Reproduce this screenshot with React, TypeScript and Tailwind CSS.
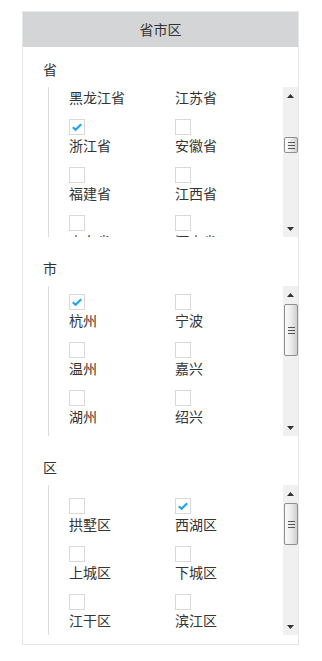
import { useLayoutEffect, useRef } from 'react'

type Item = { name: string; checked?: boolean }

const provinces: Item[] = [
  { name: '黑龙江省' },
  { name: '江苏省' },
  { name: '浙江省', checked: true },
  { name: '安徽省' },
  { name: '福建省' },
  { name: '江西省' },
  { name: '山东省' },
  { name: '河南省' },
  { name: '湖北省' },
  { name: '湖南省' },
]

const cities: Item[] = [
  { name: '杭州', checked: true },
  { name: '宁波' },
  { name: '温州' },
  { name: '嘉兴' },
  { name: '湖州' },
  { name: '绍兴' },
  { name: '金华' },
  { name: '衢州' },
]

const districts: Item[] = [
  { name: '拱墅区' },
  { name: '西湖区', checked: true },
  { name: '上城区' },
  { name: '下城区' },
  { name: '江干区' },
  { name: '滨江区' },
  { name: '萧山区' },
  { name: '余杭区' },
]

function Checkbox({ checked }: { checked?: boolean }) {
  return (
    <span className="flex h-4 w-4 items-center justify-center border border-[#d9d9d9] bg-white">
      {checked && (
        <svg width="12" height="12" viewBox="0 0 12 12">
          <path d="M1.8 6.2 L4.6 8.8 L10.2 3.2" fill="none" stroke="#1ea5ee" strokeWidth="2.2" />
        </svg>
      )}
    </span>
  )
}

// Classic-looking scrollbar drawn next to the list
function ScrollBar({ thumbTop, thumbHeight }: { thumbTop: number; thumbHeight: number }) {
  return (
    <div className="flex w-[15px] shrink-0 flex-col bg-[#f0f0f0]">
      <div className="flex h-[17px] items-center justify-center">
        <svg width="7" height="4" viewBox="0 0 7 4">
          <path d="M3.5 0 L7 4 L0 4 Z" fill="#333" />
        </svg>
      </div>
      <div className="relative flex-1">
        <div
          className="absolute left-[1px] flex w-[14px] flex-col items-center justify-center gap-[2px] rounded-[2px] border border-[#8e8e8e] bg-gradient-to-r from-[#fafafa] via-[#ececec] to-[#cfcfcf]"
          style={{ top: thumbTop, height: thumbHeight }}
        >
          <span className="h-px w-[7px] bg-[#555]" />
          <span className="h-px w-[7px] bg-[#555]" />
          <span className="h-px w-[7px] bg-[#555]" />
        </div>
      </div>
      <div className="flex h-[17px] items-center justify-center">
        <svg width="7" height="4" viewBox="0 0 7 4">
          <path d="M0 0 L7 0 L3.5 4 Z" fill="#333" />
        </svg>
      </div>
    </div>
  )
}

function Section({
  label,
  items,
  scrollTop = 0,
  padTop,
  thumbTop,
  thumbHeight,
  className = '',
}: {
  label: string
  items: Item[]
  scrollTop?: number
  padTop: string
  thumbTop: number
  thumbHeight: number
  className?: string
}) {
  const listRef = useRef<HTMLDivElement>(null)

  useLayoutEffect(() => {
    if (listRef.current) listRef.current.scrollTop = scrollTop
  }, [scrollTop])

  return (
    <div className={className}>
      <div className="pl-5 text-[14px] leading-5 text-[#333]">{label}</div>
      <div className="mt-2 ml-[25px] flex h-[150px] border-l border-[#dcdcdc]">
        <div ref={listRef} className="flex-1 overflow-hidden">
          <div className={`grid grid-cols-[106px_106px] pl-5 ${padTop}`}>
            {items.map((item) => (
              <label key={item.name} className="mb-3 flex flex-col items-start">
                <Checkbox checked={item.checked} />
                <span className="text-[14px] leading-5 text-[#333]">{item.name}</span>
              </label>
            ))}
          </div>
        </div>
        <ScrollBar thumbTop={thumbTop} thumbHeight={thumbHeight} />
      </div>
    </div>
  )
}

export default function App() {
  return (
    <div
      className="min-h-[661px] bg-white pt-[11px] pl-[22px]"
      style={{ fontFamily: '"Microsoft YaHei", "Noto Sans CJK SC", sans-serif' }}
    >
      <div className="w-[277px] border border-[#e6e6e6] bg-white">
        <div className="flex h-[35px] items-center justify-center bg-[#d4d5d6] text-[14px] text-[#333]">
          省市区
        </div>
        <div className="pt-3 pb-[9px]">
          <Section label="省" items={provinces} scrollTop={24} padTop="pt-2" thumbTop={33} thumbHeight={16} />
          <Section label="市" items={cities} padTop="pt-2" thumbTop={1} thumbHeight={52} className="mt-[21px]" />
          <Section label="区" items={districts} padTop="pt-[13px]" thumbTop={1} thumbHeight={42} className="mt-[21px]" />
        </div>
      </div>
    </div>
  )
}
